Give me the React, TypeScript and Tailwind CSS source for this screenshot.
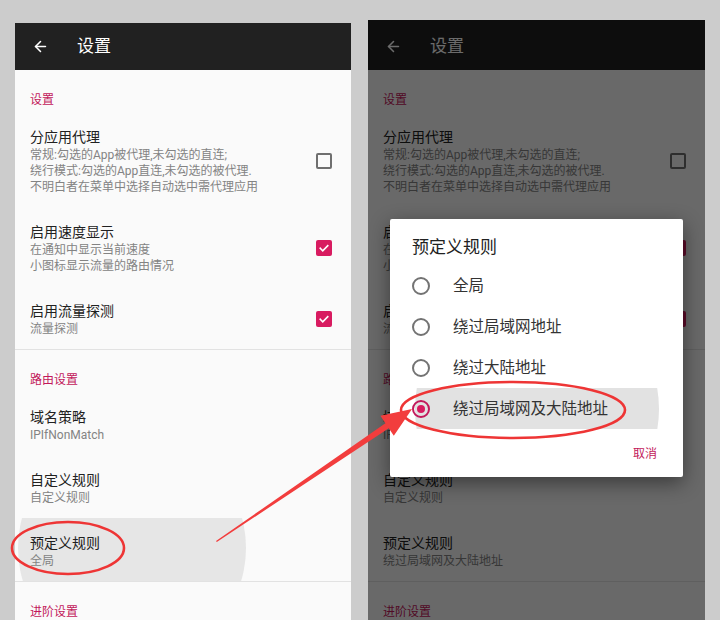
import { ArrowLeft } from 'lucide-react';

type ItemProps = { title: string; sub: string[]; check?: boolean; pressed?: boolean };

function Checkbox({ checked }: { checked: boolean }) {
    if (!checked) {
        return <div className="w-[16px] h-[16px] rounded-[2px] border-2 border-[#6f6f6f] shrink-0" />;
    }
    return (
        <div className="w-[16px] h-[16px] rounded-[2px] bg-[#d81b60] flex items-center justify-center shrink-0">
            <svg width="12" height="12" viewBox="0 0 24 24" fill="none" stroke="#ffffff" strokeWidth="3.2" strokeLinecap="square">
                <path d="M4.5 12.5l5 5 10-10" />
            </svg>
        </div>
    );
}

function Category({ label }: { label: string }) {
    return <div className="pl-[15px] pt-[21px] pb-[3px] text-[12px] leading-[18px] text-[#c2185b]">{label}</div>;
}

function Item({ title, sub, check, pressed }: ItemProps) {
    return (
        <div className="relative overflow-hidden flex items-center pl-[15px] pr-[19px] pt-[15px] pb-[12px]">
            {pressed && <div className="absolute left-[3px] top-[-84px] w-[228px] h-[228px] rounded-full bg-[#e6e6e6]" />}
            <div className="relative flex-1">
                <div className="text-[14px] leading-[20px] text-[#212121]">{title}</div>
                {sub.map((s) => (
                    <div key={s} className="text-[12px] leading-[16px] text-[#838383]">{s}</div>
                ))}
            </div>
            {check !== undefined && <Checkbox checked={check} />}
        </div>
    );
}

function Settings({ predef, pressed }: { predef: string; pressed?: boolean }) {
    return (
        <div className="flex flex-col bg-[#fafafa]">
            <Category label="设置" />
            <Item
                title="分应用代理"
                sub={['常规:勾选的App被代理,未勾选的直连;', '绕行模式:勾选的App直连,未勾选的被代理.', '不明白者在菜单中选择自动选中需代理应用']}
                check={false}
            />
            <Item title="启用速度显示" sub={['在通知中显示当前速度', '小图标显示流量的路由情况']} check={true} />
            <Item title="启用流量探测" sub={['流量探测']} check={true} />
            <div className="h-px bg-[#e2e2e2]" />
            <Category label="路由设置" />
            <Item title="域名策略" sub={['IPIfNonMatch']} />
            <Item title="自定义规则" sub={['自定义规则']} />
            <Item title="预定义规则" sub={[predef]} pressed={pressed} />
            <div className="h-px bg-[#e2e2e2]" />
            <Category label="进阶设置" />
            <div className="h-[80px]" />
        </div>
    );
}

function Header({ tall }: { tall?: boolean }) {
    return (
        <div className={(tall ? 'h-[50px] pt-[3px]' : 'h-[47px]') + ' bg-[#212121] flex items-center pl-[17px] text-white'}>
            <ArrowLeft size={17} strokeWidth={2.2} />
            <span className="ml-[28px] text-[17px]">设置</span>
        </div>
    );
}

function Radio({ on }: { on?: boolean }) {
    if (on) {
        return (
            <div className="w-[18px] h-[18px] rounded-full border-2 border-[#c2185b] flex items-center justify-center">
                <div className="w-[8px] h-[8px] rounded-full bg-[#d81b60]" />
            </div>
        );
    }
    return <div className="w-[18px] h-[18px] rounded-full border-2 border-[#737373]" />;
}

function Dialog() {
    const opts = ['全局', '绕过局域网地址', '绕过大陆地址', '绕过局域网及大陆地址'];
    return (
        <div className="absolute left-[22px] top-[199px] w-[293px] bg-white rounded-[2px] shadow-[0_6px_20px_rgba(0,0,0,0.45)] flex flex-col">
            <div className="pl-[22px] pt-[16px] pb-[6px] text-[17px] leading-[24px] text-[#212121]">预定义规则</div>
            {opts.map((o, i) => (
                <div key={o} className="relative overflow-hidden h-[41px] flex items-center pl-[22px]">
                    {i === 3 && <div className="absolute left-[25px] top-[-101px] w-[244px] h-[244px] rounded-full bg-[#e2e2e2]" />}
                    <div className="relative flex items-center">
                        <Radio on={i === 3} />
                        <span className="ml-[23px] text-[15.5px] leading-[22px] pt-px text-[#333333]">{o}</span>
                    </div>
                </div>
            ))}
            <div className="flex justify-end pr-[26px] pt-[16px] pb-[14px] text-[12px] leading-[18px] text-[#c2185b]">取消</div>
        </div>
    );
}

export default function App() {
    return (
        <div className="relative w-[720px] h-[620px] overflow-hidden bg-[#cccccc] flex items-start font-[Roboto,'Noto_Sans_CJK_SC',sans-serif]">
            <div className="ml-[15px] mt-[23px] w-[336px] shrink-0">
                <Header />
                <Settings predef="全局" pressed />
            </div>
            <div className="relative ml-[17px] mt-[20px] w-[337px] shrink-0">
                <Header tall />
                <Settings predef="绕过局域网及大陆地址" />
                <div className="absolute inset-0 bg-black/[0.58]" />
                <Dialog />
            </div>
            <svg className="absolute inset-0 pointer-events-none" width="720" height="620" viewBox="0 0 720 620">
                <ellipse cx="68" cy="548" rx="56" ry="26" fill="none" stroke="#ee3535" strokeWidth="2.6" />
                <ellipse cx="513" cy="410" rx="112" ry="28" fill="none" stroke="#ee3535" strokeWidth="2.6" />
                <polygon
                    points="216,541 385.4,423.3 380.4,415.8 412,409 393.8,435.8 388.8,428.3 216.8,542"
                    fill="#f23d3d"
                />
            </svg>
        </div>
    );
}
